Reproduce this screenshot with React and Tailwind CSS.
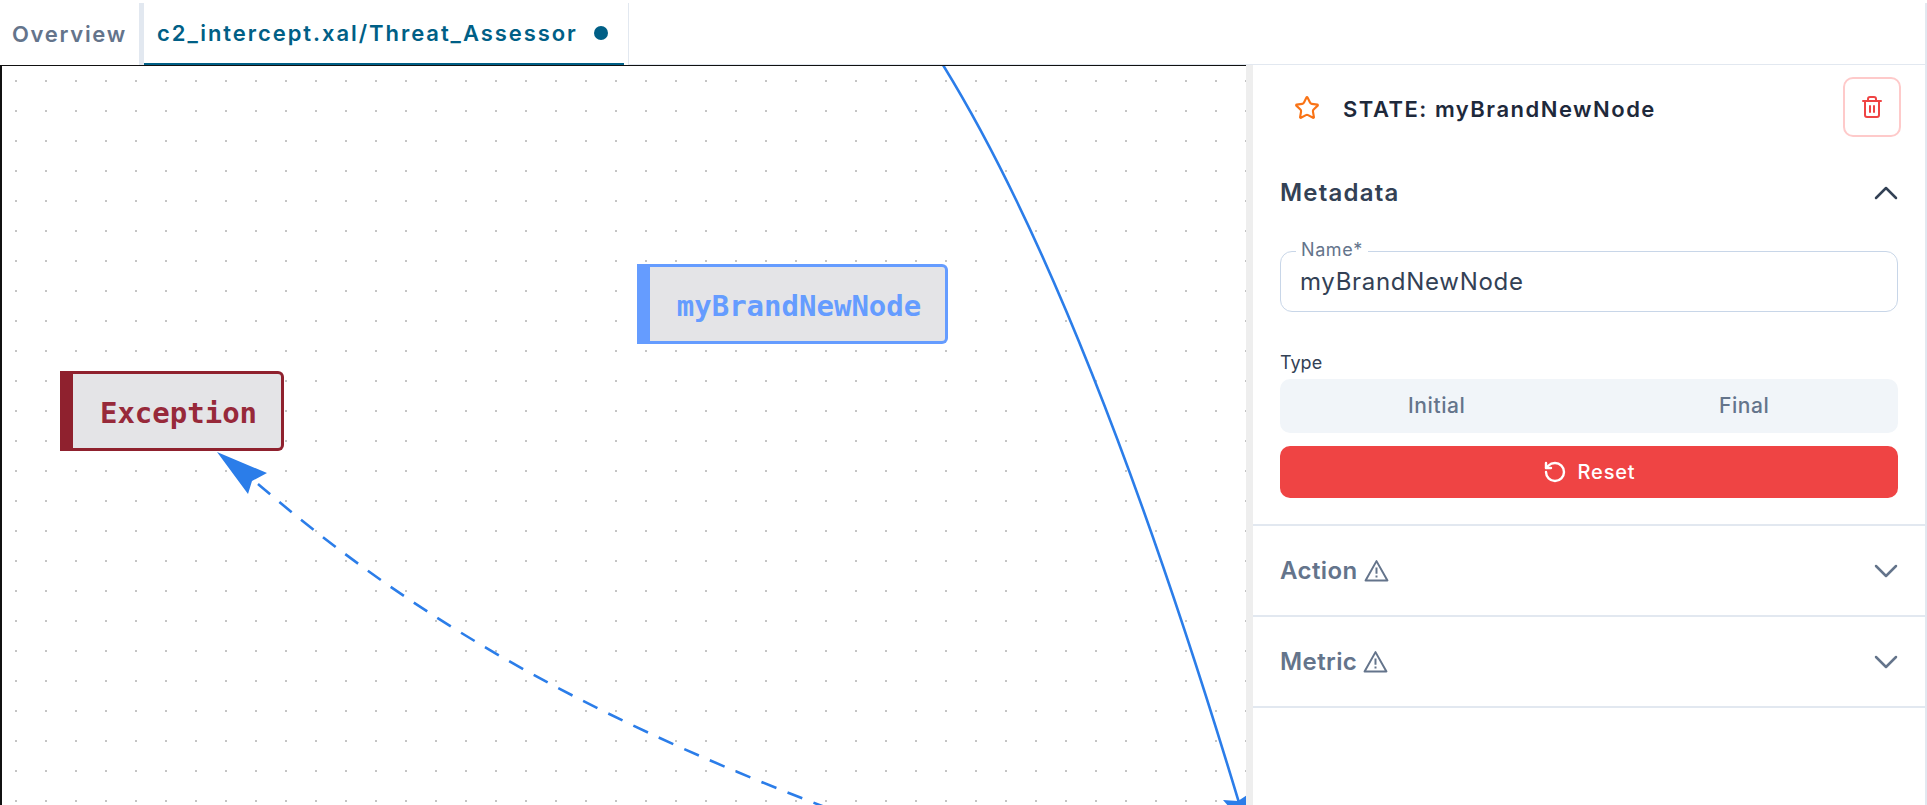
import { Star, Trash2, ChevronUp, ChevronDown, RotateCcw } from 'lucide-react'

/* ─── Canvas node ─────────────────────────────────────────── */
function StateNode({ label, className, colours }) {
  return (
    <div className={`absolute h-[80px] flex items-stretch rounded-r-[4px] overflow-hidden ${className}`}>
      <div className={`w-[13px] shrink-0 ${colours.bar}`} />
      <div className={`flex-1 flex items-center justify-center bg-[#e4e4e7] border-y-[3px] border-r-[3px] rounded-r-[6px] ${colours.box}`}>
        <span className={`font-['DejaVu_Sans_Mono',monospace] font-bold text-[29px] leading-none pl-[3px] pt-[5px] ${colours.text}`}>{label}</span>
      </div>
    </div>
  )
}

/* ─── Edges between the nodes ─────────────────────────────── */
function Edges() {
  return (
    <svg className="absolute left-[-2px] top-[-1px] w-[1250px] h-[745px]" viewBox="0 64 1250 745">
      <path d="M 943 64 C 1030 205 1130 440 1240 805" fill="none" stroke="#2b7de9" strokeWidth="2.6" />
      <path d="M 258 483 C 400 605 560 705 830 808" fill="none" stroke="#2b7de9" strokeWidth="2.6" strokeDasharray="16 12" />
      <path d="M 217 451 L 267 472 L 252 480 L 248 493 Z" fill="#2b7de9" />
      <path d="M 1223 799 L 1238 800 L 1250 792 L 1250 830 Z" fill="#2b7de9" />
    </svg>
  )
}

function WarnIcon() {
  return (
    <svg width="25" height="23" viewBox="0 0 24 22" fill="none" stroke="currentColor" strokeWidth="1.9">
      <path d="M12 2 L22.5 20.5 H1.5 Z" strokeLinejoin="round" />
      <path d="M12 8 V14 M12 15.8 V17.6" />
    </svg>
  )
}

/* ─── Collapsed accordion row ─────────────────────────────── */
function Section({ title }) {
  return (
    <div className="h-[91px] border-b-2 border-[#e2e8f0] px-[27px] flex items-center justify-between">
      <div className="flex items-center gap-[6px] text-[#64748b]">
        <span className="text-[24px] font-semibold tracking-[0.4px]">{title}</span>
        <WarnIcon />
      </div>
      <ChevronDown size={40} strokeWidth={1.5} className="text-[#64748b] -my-[8px] -mr-[8px]" />
    </div>
  )
}

export default function App() {
  return (
    <div className="w-[1927px] h-[805px] flex flex-col overflow-hidden bg-white font-['Inter',sans-serif]">
      {/* Tabs */}
      <div className="mt-[3px] h-[62px] shrink-0 flex border-r-2 border-[#e2e8f0]">
        <div className="w-[139px] flex items-center pl-[12px] text-[22px] font-semibold text-[#64748b] tracking-[1.7px]">Overview</div>
        <div className="w-[5px] bg-[#e2e8f0]" />
        <div className="w-[485px] border-r border-[#e2e8f0] pr-[4px]">
          <div className="h-full flex items-center border-b-[2px] border-[#005f86] pl-[13px] text-[#005f86]">
            <span className="text-[22px] font-semibold tracking-[1.95px]">c2_intercept.xal/Threat_Assessor</span>
            <span className="ml-[16px] w-[14px] h-[14px] rounded-full bg-[#005f86]" />
          </div>
        </div>
        <div className="flex-1 border-b border-[#e2e8f0]" />
      </div>

      <div className="flex-1 flex min-h-0">
        {/* Canvas */}
        <div className="relative w-[1246px] shrink-0 overflow-hidden border-l-2 border-t-[1px] border-[#111] bg-[radial-gradient(#c4c4c4_1px,transparent_1.2px)] bg-[size:30px_30px] bg-[position:-1px_0px]">
          <Edges />
          <StateNode
            label="myBrandNewNode"
            className="left-[635px] top-[198px] w-[311px]"
            colours={{ bar: 'bg-[#659cff]', box: 'border-[#659cff]', text: 'text-[#659cff]' }}
          />
          <StateNode
            label="Exception"
            className="left-[58px] top-[305px] w-[224px]"
            colours={{ bar: 'bg-[#8f212e]', box: 'border-[#8f212e]', text: 'text-[#97293a]' }}
          />
        </div>

        {/* Splitter */}
        <div className="w-[7px] shrink-0 bg-[#eeeeee]" />

        {/* Details panel */}
        <div className="flex-1 border-r-2 border-[#e2e8f0] flex flex-col text-[#1e293b]">
          <div className="flex items-start pl-[41px] pr-[24px] pt-[12px]">
            <Star size={26} strokeWidth={2} className="text-[#f97316] mt-[18px]" />
            <span className="ml-[23px] mt-[18px] text-[22px] leading-[28px] font-semibold tracking-[1.5px]">STATE: myBrandNewNode</span>
            <button className="ml-auto w-[58px] h-[60px] rounded-[10px] border-2 border-[#fecaca] flex items-center justify-center text-[#ef4444]">
              <Trash2 size={24} strokeWidth={2} />
            </button>
          </div>

          <div className="border-b-2 border-[#e2e8f0] px-[27px] pb-[26px]">
            <div className="mt-[39px] h-[34px] flex items-center justify-between">
              <span className="text-[24px] font-semibold tracking-[1.2px] text-[#334155]">Metadata</span>
              <ChevronUp size={40} strokeWidth={1.5} className="text-[#334155] -my-[8px] -mr-[8px]" />
            </div>

            <div className="relative mt-[41px] h-[61px] rounded-[12px] border-[1.5px] border-[#c8d6e8] flex items-center pl-[19px]">
              <span className="absolute left-[15px] top-[-13px] bg-white px-[5px] text-[18px] leading-[22px] tracking-[0.6px] text-[#64748b]">Name*</span>
              <span className="text-[24px] text-[#334155] tracking-[0.7px]">myBrandNewNode</span>
            </div>

            <div className="mt-[41px] text-[18px] leading-[20px] text-[#334155]">Type</div>
            <div className="mt-[6px] h-[54px] pl-[3px] rounded-[10px] bg-[#f1f5f9] grid grid-cols-2 text-[#64748b] text-[21px] font-medium tracking-[0.6px]">
              <div className="flex items-center justify-center">Initial</div>
              <div className="flex items-center justify-center">Final</div>
            </div>
            <button className="mt-[13px] w-full h-[52px] rounded-[10px] bg-[#ef4444] text-white flex items-center justify-center gap-[11px] text-[20px] font-medium tracking-[0.8px]">
              <RotateCcw size={24} strokeWidth={2.4} />
              Reset
            </button>
          </div>

          <Section title="Action" />
          <Section title="Metric" />
        </div>
      </div>
    </div>
  )
}
